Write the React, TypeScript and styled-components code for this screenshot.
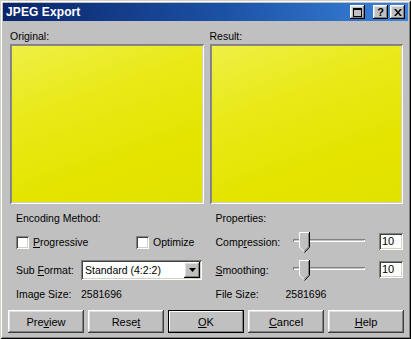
import React from "react";
import styled, { createGlobalStyle } from "styled-components";

const Global = createGlobalStyle`
  html, body { margin: 0; padding: 0; background: #c0c0c0; }
  body { font-family: "Liberation Sans", Arial, sans-serif; }
`;

const raised = `
  box-shadow: inset -1px -1px #000, inset 1px 1px #fff, inset -2px -2px #808080, inset 2px 2px #dfdfdf;
`;
const sunken = `
  box-shadow: inset 1px 1px #808080, inset -1px -1px #fff, inset 2px 2px #404040, inset -2px -2px #d4d0c8;
`;

const Window = styled.div`
  width: 411px;
  height: 339px;
  box-sizing: border-box;
  padding: 3px;
  background: #c0c0c0;
  box-shadow: inset 1px 1px #d4d0c8, inset -1px -1px #000, inset 2px 2px #fff, inset -2px -2px #808080;
  display: flex;
  flex-direction: column;
  font-size: 10.5px;
  color: #000;
`;

const TitleBar = styled.div`
  height: 18px;
  display: flex;
  align-items: center;
  padding: 0 3px;
  background: linear-gradient(90deg, #0a246a 0%, #1c52a6 55%, #3a84dc 100%);
`;

const Title = styled.span`
  color: #fff;
  font-weight: bold;
  font-size: 12px;
  letter-spacing: 0.1px;
`;

const CaptionGroup = styled.div`
  margin-left: auto;
  display: flex;
  align-items: center;
`;

const CaptionButton = styled.div<{ $gap?: number }>`
  width: 15px;
  height: 14px;
  box-sizing: border-box;
  background: #c0c0c0;
  ${raised}
  margin-left: ${(p) => p.$gap ?? 0}px;
  display: flex;
  align-items: center;
  justify-content: center;
  font-weight: bold;
  font-size: 11px;
  line-height: 1;
`;

const Content = styled.div`
  flex: 1;
  display: flex;
  flex-direction: column;
  padding: 9px 5px 0 7px;
`;

const TwoCols = styled.div`
  display: grid;
  grid-template-columns: 1fr 1fr;
  column-gap: 6px;
`;

const PreviewCol = styled.div`
  display: flex;
  flex-direction: column;
  gap: 2px;
`;

const Caption = styled.div`
  height: 12px;
  line-height: 12px;
  font-size: 10.5px;
`;

const Preview = styled.div`
  height: 160px;
  background: linear-gradient(160deg, #efef48 0%, #e9e918 35%, #e4e400 70%, #e2e200 100%);
  box-shadow: inset 1px 1px #808080, inset -1px -1px #fff, inset 2px 2px #8a8a8a, inset -2px -2px #d4d0c8;
`;

const Lower = styled(TwoCols)`
  margin-top: 8px;
`;

const Column = styled.div`
  display: grid;
  grid-template-rows: 12px 20px 20px 12px;
  row-gap: 8px;
  padding-left: 6px;
`;

const Row = styled.div`
  display: flex;
  align-items: center;
  line-height: 12px;
  white-space: nowrap;
`;

const CheckRow = styled.div`
  display: grid;
  grid-template-columns: 120px auto;
  align-items: center;
`;

const CheckGroup = styled.label`
  display: flex;
  align-items: center;
  gap: 4px;
`;

const CheckBox = styled.span`
  width: 13px;
  height: 13px;
  box-sizing: border-box;
  background: #fff;
  ${sunken}
`;

const FieldLabel = styled.span<{ $w: number }>`
  width: ${(p) => p.$w}px;
  flex: none;
`;

const Select = styled.div`
  width: 121px;
  height: 20px;
  box-sizing: border-box;
  background: #fff;
  ${sunken}
  display: flex;
  align-items: center;
  padding: 2px;
`;

const SelectText = styled.span`
  flex: 1;
  padding-left: 2px;
  font-size: 10.5px;
`;

const DropButton = styled.span`
  width: 16px;
  height: 16px;
  box-sizing: border-box;
  background: #c0c0c0;
  ${raised}
  display: flex;
  align-items: center;
  justify-content: center;
`;

const SliderBox = styled.div`
  position: relative;
  width: 72px;
  height: 20px;
  display: flex;
  align-items: center;
`;

const Track = styled.div`
  width: 100%;
  height: 3px;
  box-sizing: border-box;
  box-shadow: inset 1px 1px #808080, inset -1px -1px #fff;
  background: #c0c0c0;
  margin-top: -3px;
`;

const Thumb = styled.svg`
  position: absolute;
  top: 0;
`;

const Edit = styled.div`
  margin-left: auto;
  width: 24px;
  height: 17px;
  box-sizing: border-box;
  background: #fff;
  ${sunken}
  padding: 2px 3px;
  font-size: 11px;
  line-height: 13px;
  align-self: flex-start;
  margin-top: 1px;
`;

const ButtonRow = styled.div`
  margin: 10px -1px 0 -2px;
  display: grid;
  grid-template-columns: repeat(5, 1fr);
  column-gap: 4px;
`;

const PushButton = styled.button<{ $default?: boolean }>`
  height: 23px;
  border: none;
  padding: 0;
  background: #c0c0c0;
  font-family: "Liberation Sans", Arial, sans-serif;
  font-size: 11px;
  color: #000;
  ${(p) =>
    p.$default
      ? `box-shadow: inset 0 0 0 1px #000, inset -2px -2px #808080, inset 2px 2px #fff;`
      : `box-shadow: inset -1px -1px #404040, inset 1px 1px #fff, inset -2px -2px #808080, inset 2px 2px #dfdfdf;`}
`;

const Slider: React.FC<{ value: number }> = ({ value }) => {
  const left = (value / 100) * (72 - 11);
  return (
    <SliderBox>
      <Track />
      <Thumb width="11" height="21" viewBox="0 0 11 21" style={{ left }}>
        <polygon points="0,0 11,0 11,15 5.5,20.5 0,15" fill="#c0c0c0" />
        <polyline points="0.5,15 0.5,0.5 10,0.5" stroke="#fff" fill="none" />
        <line x1="0.5" y1="15" x2="5" y2="19.5" stroke="#fff" />
        <polyline points="10.5,0 10.5,15.2 5.5,20.5" stroke="#000" fill="none" />
        <polyline points="9.5,1 9.5,14.8 5.3,19" stroke="#808080" fill="none" />
      </Thumb>
    </SliderBox>
  );
};

export default function App() {
  return (
    <>
      <Global />
      <Window>
        <TitleBar>
          <Title>JPEG Export</Title>
          <CaptionGroup>
            <CaptionButton>
              <svg width="9" height="9" viewBox="0 0 9 9">
                <rect x="0.5" y="0.5" width="8" height="8" fill="none" stroke="#000" />
                <line x1="0" y1="1.5" x2="9" y2="1.5" stroke="#000" />
              </svg>
            </CaptionButton>
            <CaptionButton $gap={8}>?</CaptionButton>
            <CaptionButton $gap={2}>
              <svg width="8" height="7" viewBox="0 0 8 7">
                <path d="M0,0 L2,0 L4,2.5 L6,0 L8,0 L5,3.5 L8,7 L6,7 L4,4.5 L2,7 L0,7 L3,3.5 Z" fill="#000" />
              </svg>
            </CaptionButton>
          </CaptionGroup>
        </TitleBar>
        <Content>
          <TwoCols>
            <PreviewCol>
              <Caption>Original:</Caption>
              <Preview />
            </PreviewCol>
            <PreviewCol>
              <Caption>Result:</Caption>
              <Preview />
            </PreviewCol>
          </TwoCols>
          <Lower>
            <Column>
              <Row>Encoding Method:</Row>
              <CheckRow>
                <CheckGroup>
                  <CheckBox />
                  <span>
                    <u>P</u>rogressive
                  </span>
                </CheckGroup>
                <CheckGroup>
                  <CheckBox />
                  <span>Optimize</span>
                </CheckGroup>
              </CheckRow>
              <Row>
                <FieldLabel $w={65}>
                  Sub <u>F</u>ormat:
                </FieldLabel>
                <Select>
                  <SelectText>Standard (4:2:2)</SelectText>
                  <DropButton>
                    <svg width="7" height="4" viewBox="0 0 7 4">
                      <polygon points="0,0 7,0 3.5,4" fill="#000" />
                    </svg>
                  </DropButton>
                </Select>
              </Row>
              <Row>
                <FieldLabel $w={65}>Image Size:</FieldLabel>
                <span>2581696</span>
              </Row>
            </Column>
            <Column>
              <Row>Properties:</Row>
              <Row>
                <FieldLabel $w={77}>
                  Comp<u>r</u>ession:
                </FieldLabel>
                <Slider value={10} />
                <Edit>10</Edit>
              </Row>
              <Row>
                <FieldLabel $w={77}>
                  <u>S</u>moothing:
                </FieldLabel>
                <Slider value={10} />
                <Edit>10</Edit>
              </Row>
              <Row>
                <FieldLabel $w={70}>File Size:</FieldLabel>
                <span>2581696</span>
              </Row>
            </Column>
          </Lower>
          <ButtonRow>
            <PushButton>
              Pre<u>v</u>iew
            </PushButton>
            <PushButton>
              Rese<u>t</u>
            </PushButton>
            <PushButton $default>
              <u>O</u>K
            </PushButton>
            <PushButton>
              <u>C</u>ancel
            </PushButton>
            <PushButton>
              <u>H</u>elp
            </PushButton>
          </ButtonRow>
        </Content>
      </Window>
    </>
  );
}
